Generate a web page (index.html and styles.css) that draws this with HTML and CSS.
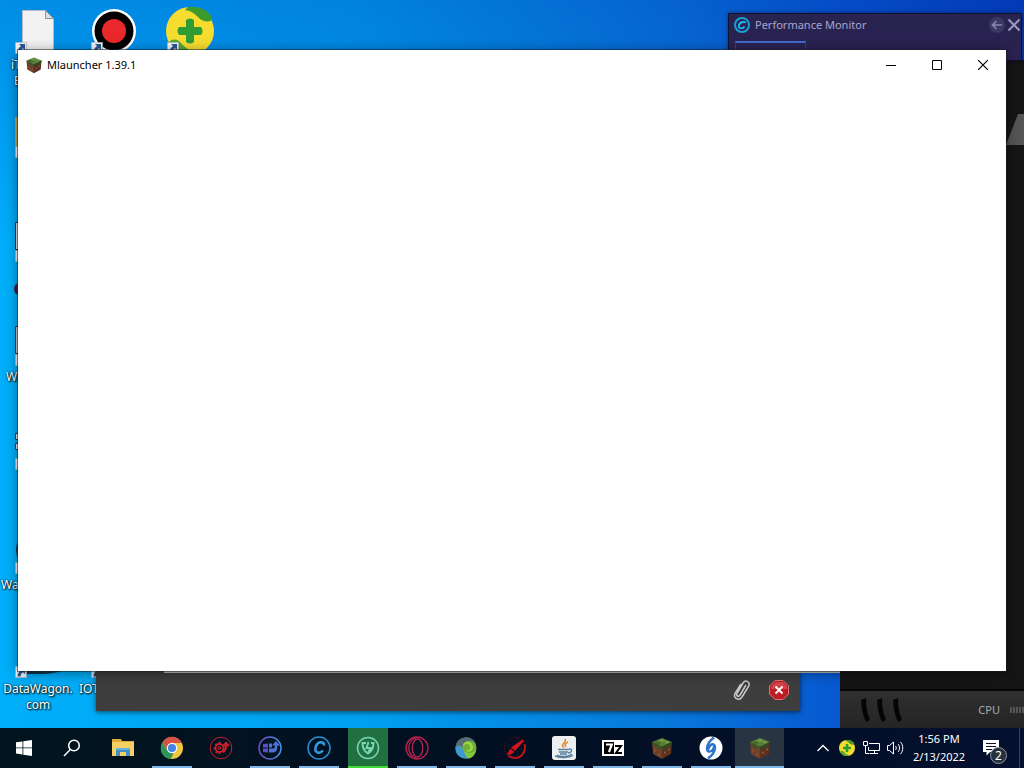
FILE: index.html
```
<!DOCTYPE html>
<html lang="en">
<head>
    <meta charset="UTF-8">
    <meta name="viewport" content="width=device-width, initial-scale=1.0">
    <title>Mlauncher 1.39.1</title>
    <link rel="stylesheet" href="styles.css">
</head>
<body>
    <!-- shared shapes -->
    <svg class="defs" width="0" height="0">
        <linearGradient id="violet" x1="0" y1="0" x2="1" y2="0">
            <stop offset="0" stop-color="#7048c4"/>
            <stop offset="1" stop-color="#4a90e0"/>
        </linearGradient>
        <symbol id="arrow" viewBox="0 0 12 12">
            <path fill="#f2f4f6" stroke="#9aa3ab" stroke-width=".6" d="M.3.3h11.400v11.400H.3z"/>
            <path fill="#2c5592" d="M4 2h6v6L8 6.200C6 7.500 5.500 9 5.500 10.500H2.500C2.500 7.500 4 5.500 6 4z"/>
        </symbol>
        <symbol id="block" viewBox="0 0 24 24">
            <path fill="#567f36" d="M12 2l10 4-10 5L2 6z"/>
            <path fill="#6f9a45" d="M12 3l4 1.500-4 1.500-4-1.500zM17 5l3 1-3 1.500-3-1z"/>
            <path fill="#44692b" d="M7 5l4 2-3 1.500L4 6.500z"/>
            <path fill="#704027" d="M2 6l10 5v12L3 18z"/>
            <path fill="#593321" d="M22 6l-10 5v12l9-5z"/>
            <path fill="#3b5428" d="M2 6l10 5v3l-2-1v-1l-2-1v2l-3-1.500V10l-2-1z"/>
            <path fill="#2f4a22" d="M22 6l-10 5v3l2-1v-1l3-1.500v2l2-1v-2l3-1.500z"/>
            <path fill="#8a5232" d="M4 13l2 1v2l-2-1zM8 17l2 1v2l-2-1zM14 16l2-1v2l-2 1zM18 13l2-1v2l-2 1z"/>
        </symbol>
        <symbol id="shield360" viewBox="0 0 48 48">
            <circle cx="24" cy="24" r="24" fill="#f7dc30"/>
            <path fill="#3d9b2c" d="M22 0c12-1 19 3 23 9v5c-5 1-9 0-12-3-4-4-7-7-14-8z"/>
            <path fill="#52a92f" d="M3 35c4-4 9-3 12 1 5 6 10 8 17 10-12 6-24 0-29-11z"/>
            <path fill="#2f9b35" d="M20 13q4-3 8 0v7h7q3 4 0 8h-7v7q-4 3-8 0v-7h-7q-3-4 0-8h7z"/>
        </symbol>
    </svg>

    <main class="desktop">
        <div class="icons">
            <div class="icon">
                <svg class="icon-image" viewBox="0 0 48 48">
                    <path fill="#f1f2f1" stroke="#b5bbbe" d="M8.500 4.500h23l8 8V48h-31z"/>
                    <path fill="#dcdfdf" stroke="#8e979c" d="M31.500 4.500v8h8z"/>
                    <use href="#arrow" x="1" y="36" width="12" height="12"/>
                </svg>
                <span class="label label-short">iT<br>&nbsp;E</span>
            </div>
            <div class="icon">
                <svg class="icon-image" viewBox="0 0 48 48">
                    <circle cx="24" cy="25" r="22" fill="#fff"/>
                    <circle cx="24" cy="25" r="19.500" fill="#000"/>
                    <circle cx="24" cy="25" r="12" fill="#e8282b"/>
                    <use href="#arrow" x="1" y="36" width="12" height="12"/>
                </svg>
            </div>
            <div class="icon">
                <svg class="icon-image" viewBox="0 0 48 48">
                    <use href="#shield360" x="0" y="1" width="48" height="48"/>
                    <use href="#arrow" x="1" y="36" width="12" height="12"/>
                </svg>
            </div>

            <div class="icon first">
                <svg class="icon-image" viewBox="0 0 48 48">
                    <path fill="#c4a24a" d="M1 7h40v29H1z"/>
                    <use href="#arrow" x="1" y="36" width="12" height="12"/>
                </svg>
            </div>
            <div class="icon first">
                <svg class="icon-image" viewBox="0 0 48 48">
                    <path fill="#dfe3e6" stroke="#26323c" d="M1.500 8.500h40v27h-40z"/>
                    <use href="#arrow" x="1" y="36" width="12" height="12"/>
                </svg>
                <svg class="label-dot" viewBox="0 0 8 12"><ellipse cx="4" cy="6" rx="4" ry="5.500" fill="#46204e"/></svg>
            </div>
            <div class="icon first">
                <svg class="icon-image" viewBox="0 0 48 48">
                    <path fill="#cfc8c6" stroke="#4b3430" d="M1.500 8.500h40v27h-40z"/>
                    <use href="#arrow" x="1" y="36" width="12" height="12"/>
                </svg>
                <span class="label label-w">W</span>
            </div>
            <div class="icon first">
                <svg class="icon-image" viewBox="0 0 48 48">
                    <path fill="#e5eaee" stroke="#22405c" d="M1.500 11.500h10v6h-10zM1.500 21.500h10v6h-10z"/>
                    <use href="#arrow" x="1" y="36" width="12" height="12"/>
                </svg>
            </div>
            <div class="icon first">
                <svg class="icon-image" viewBox="0 0 48 48">
                    <circle cx="22" cy="24" r="20" fill="#1d3d54"/>
                    <use href="#arrow" x="1" y="36" width="12" height="12"/>
                </svg>
                <span class="label label-wa">Wa</span>
            </div>
            <div class="icon first">
                <svg class="icon-image" viewBox="0 0 48 48">
                    <path fill="#14344d" d="M10 20h38v21c-12 4-26 3-38 3z"/>
                    <use href="#arrow" x="1" y="36" width="12" height="12"/>
                </svg>
                <span class="label">DataWagon. com</span>
            </div>
            <div class="icon">
                <svg class="icon-image" viewBox="0 0 48 48">
                    <use href="#arrow" x="1" y="36" width="12" height="12"/>
                </svg>
                <span class="label label-iot">IOT</span>
            </div>
        </div>

        <section class="monitor">
            <svg class="monitor-tab" viewBox="0 0 18 32"><path fill="#555" d="M12 0h6v31H0z"/></svg>
            <div class="monitor-bottom">
                <svg class="vents" viewBox="0 0 44 24">
                    <path fill="#050505" d="M1 2l5-2c0 8 1 15 4 22l-4 2C3 17 1 10 1 2zM17 2l5-2c0 8 1 15 4 22l-4 2c-3-7-5-14-5-22zM33 2l5-2c0 8 1 15 4 22l-4 2c-3-7-5-14-5-22z"/>
                </svg>
                <span class="cpu">CPU</span>
                <span class="meter"></span>
            </div>
        </section>

        <section class="performance">
            <header class="performance-header">
                <svg width="16" height="16" viewBox="0 0 16 16" fill="none">
                    <circle cx="8" cy="8" r="7" stroke="#16a0d8" stroke-width="2"/>
                    <path stroke="#20b4e6" stroke-width="2" d="M11.500 6C10.500 3.500 5 5.500 4.800 9c0 3.500 4.500 2.500 5.700.5"/>
                </svg>
                <h2>Performance Monitor</h2>
                <button class="performance-button" aria-label="Back">
                    <svg width="16" height="16" viewBox="0 0 16 16" fill="none"><circle cx="8" cy="8" r="8" fill="#3c3763"/><path stroke="#8a84b5" stroke-width="1.600" d="M13 8H3.500M7.500 4l-4 4 4 4"/></svg>
                </button>
                <button class="performance-button" aria-label="Close monitor">
                    <svg width="14" height="14" viewBox="0 0 14 14"><path stroke="#9d98c1" stroke-width="2" d="M1.500 1.500l11 11M12.500 1.500l-11 11"/></svg>
                </button>
            </header>
            <div class="performance-tab"></div>
        </section>

        <div class="back-window"></div>
        <section class="chat">
            <button class="chat-button" aria-label="Attach">
                <svg width="20" height="22" viewBox="0 0 20 22" fill="none" stroke="#c9c9c9" stroke-width="1.500"><path d="M14 6L8 16c-1.500 2.500-4.500.8-3-1.700L11 4c2.500-4 8-1 5.500 3.300L10 18c-3 4.500-9.500 1.200-6.800-3.800L9 5"/></svg>
            </button>
            <button class="chat-button" aria-label="Stop">
                <svg width="20" height="20" viewBox="0 0 20 20"><path fill="#c01c25" stroke="#dc7474" d="M6 .5h8L19.500 6v8L14 19.500H6L.5 14V6z"/><path fill="#d2444a" d="M6.500 2h7L18 6.500V9H2V6.500z"/><path stroke="#fff" stroke-width="1.800" d="M6.500 6.500l7 7M13.500 6.500l-7 7"/></svg>
            </button>
        </section>

        <section class="window">
            <header class="title-bar">
                <svg width="18" height="18"><use href="#block"/></svg>
                <h1>Mlauncher 1.39.1</h1>
                <div class="window-buttons">
                    <button aria-label="Minimize"><svg width="10" height="10" viewBox="0 0 10 10"><path stroke="#000" d="M0 5.500h10"/></svg></button>
                    <button aria-label="Maximize"><svg width="10" height="10" viewBox="0 0 10 10"><path fill="none" stroke="#000" d="M.5.5h9v9h-9z"/></svg></button>
                    <button aria-label="Close"><svg width="10" height="10" viewBox="0 0 10 10"><path stroke="#000" stroke-width="1.200" d="M0 0l10 10M10 0L0 10"/></svg></button>
                </div>
            </header>
        </section>
    </main>

    <footer class="taskbar">
        <button class="system" aria-label="Start">
            <svg width="16" height="16" viewBox="0 0 16 16" fill="#fff"><path d="M0 2.300L6.500 1.400v6.100H0zM7.300 1.300L16 0v7.500H7.300zM0 8.300h6.500v6.200L0 13.600zM7.300 8.300H16V16l-8.700-1.300z"/></svg>
        </button>
        <button class="system" aria-label="Search">
            <svg width="18" height="18" viewBox="0 0 18 18" fill="none" stroke="#fff" stroke-width="1.500"><circle cx="11" cy="6.500" r="5.300"/><path d="M7.300 10.500L1 17"/></svg>
        </button>
        <div class="apps">
            <button class="app" aria-label="File Explorer">
                <svg viewBox="0 0 24 24"><path fill="#e0a93a" d="M1 3h9l1 2h12v4H1z"/><path fill="#f6d065" d="M1 6h22v14H1z"/><path fill="#418fc4" d="M5 12h14v8h-4v-4H9v4H5z"/><path fill="#69b0dc" d="M5 12h14v2H5z"/></svg>
            </button>
            <button class="app open" aria-label="Chrome">
                <svg viewBox="0 0 24 24"><circle cx="12" cy="12" r="11" fill="#f0c840"/><path fill="#d65046" d="M2.500 6.500C7-1.500 18-1 21.800 7H12L7.500 14z"/><path fill="#2c9659" d="M2.500 6.500L7.800 15l6 1.500-3 6.400C1.500 22-1.500 13 2.500 6.500z"/><circle cx="12" cy="12" r="5.200" fill="#fff"/><circle cx="12" cy="12" r="4.100" fill="#4583e8"/></svg>
            </button>
            <button class="app" aria-label="Driver updater">
                <svg viewBox="0 0 24 24" fill="none" stroke="#c8202c"><circle cx="12" cy="12" r="10.800"/><circle cx="10.500" cy="12" r="4" stroke-width="1.800"/><path stroke-width="2" d="M6.500 8l1.500 1.500M4.500 12.500h2M7 17l1.200-2M10.500 6v2M10.500 16v2M14 16l-1-1"/><path stroke-width="2.200" d="M14 16c3-1 3-4 3-7M14.200 10L17 7l3 3"/><circle cx="10.500" cy="12" r="1.500"/></svg>
            </button>
            <button class="app open" aria-label="Software updater">
                <svg viewBox="0 0 24 24" fill="none"><circle cx="12" cy="12" r="11" stroke="url(#violet)" stroke-width="1.500"/><path fill="#5a50c4" d="M5 8l5-.5v4H5zM5 12.500h5v4L5 16z"/><path fill="#4a72d8" d="M11 7.500h3v4h-3zM11 12.500h4c2 0 2-2 2-4h2.500c0 5-1 8-4.500 8h-4zM14 9.500L18 5l4 4.500z"/></svg>
            </button>
            <button class="app open" aria-label="System care">
                <svg viewBox="0 0 24 24" fill="none"><circle cx="12" cy="12" r="11" stroke="#278ed1" stroke-width="1.500"/><path stroke="#2d9ce2" stroke-width="2.600" d="M17 9.500c.5-4.500-6-4.500-8 .5-2.500 7 3.500 8.500 7 4.500"/></svg>
            </button>
            <button class="app open secure" aria-label="Malware fighter">
                <svg viewBox="0 0 24 24" fill="none" stroke="#74d6b5"><circle cx="12" cy="12" r="10.500" stroke-width="1.500"/><path stroke-width="2" d="M10 7H6.500c0 5 1.500 8 5.500 10.500 4-2.500 5.500-5.500 5.500-10.500H15M12.500 6l-2 6h4l-2 4"/></svg>
            </button>
            <button class="app open" aria-label="Opera">
                <svg viewBox="0 0 24 24" fill="none" stroke="#b92250" stroke-width="1.300"><circle cx="12" cy="12" r="11"/><ellipse cx="12.500" cy="12" rx="5.200" ry="9"/><path d="M12 1.500C1 5 1 19 12 22.500"/></svg>
            </button>
            <button class="app open" aria-label="Edge">
                <svg viewBox="0 0 24 24"><circle cx="12" cy="12" r="10.500" fill="#6fae3c"/><path fill="#546c74" d="M1.500 12C2-1 18-1.500 21.500 7 14 2 8 6 9 12c-2-3-5-3-7.500 0z"/><path fill="#9bd83c" d="M9 11C8 4 19 4 19 11c0 5-6 6-7 3 3 1 5-1 4-4-2-4-6-2-7 1z"/><path fill="#3b9bd0" d="M1.500 12c4-5 6-1 7.500 2 2 4 3 6 6 8C8 24 1 19 1.500 12z"/><path fill="#82c83a" d="M10 15c3 3 8 3 12-1-1 6-5 8.500-8 8.500-2-2-3-4-4-7.500z"/></svg>
            </button>
            <button class="app open" aria-label="Red tool">
                <svg viewBox="0 0 24 24" fill="none"><circle cx="12" cy="12" r="10.500" stroke="#3d0a14"/><path fill="#d3141c" d="M19.500 3.500L21 5l-9 10-4-3.500zM7.500 12.500l4 3.500-3.500 2.500-4.500.5z"/><path stroke="#b8141e" stroke-width="2" d="M21.500 8c2 7-3 14-9 14-3 0-5-1-7-2"/></svg>
            </button>
            <button class="app open" aria-label="Java">
                <svg viewBox="0 0 24 24" fill="none"><rect x="0" y="0" width="24" height="24" rx="3" fill="#edf0f1"/><path stroke="#e38725" stroke-width="1.500" d="M13 3c3 3-6 5-1 9M16 6c-4 2-3 3-2 5"/><path stroke="#5b7f9c" stroke-width="1.400" d="M6 13.500h11M7 16h9M17 13c4-1 3 4-1 4M5 19c3 2 12 2 15-1M8 18h7M3 20c6 2.500 14 2 18-.5"/></svg>
            </button>
            <button class="app open" aria-label="7-Zip">
                <svg viewBox="0 0 24 24"><path fill="#fff" d="M1 4h22v16H1z"/><path fill="#000" d="M3 6h10v12H3z"/><path fill="none" stroke="#fff" stroke-width="2.200" d="M5 8.500h5.800L8 16"/><path fill="none" stroke="#000" stroke-width="2" d="M14 10h6l-5 7h6"/></svg>
            </button>
            <button class="app open" aria-label="Minecraft">
                <svg><use href="#block"/></svg>
            </button>
            <button class="app open" aria-label="Blue launcher">
                <svg viewBox="0 0 24 24" fill="none"><circle cx="12" cy="12" r="11.500" fill="#fff"/><path stroke="#2c74cc" stroke-width="2.400" d="M15 1.500c-4 3-7 6-7 11 0 4 4 4 6 1 2-4 1-6-1-5-2 0-3 3-4 5M9 22.500c4-3 7-7 7-11 0-3-2-4-4-3"/></svg>
            </button>
            <button class="app open active" aria-label="Mlauncher">
                <svg><use href="#block"/></svg>
            </button>
        </div>
        <div class="tray">
            <button class="tray-button" aria-label="Show hidden icons"><svg width="12" height="8" viewBox="0 0 12 8"><path fill="none" stroke="#fff" stroke-width="1.300" d="M.5 7L6 1.500 11.500 7"/></svg></button>
            <button class="tray-button" aria-label="360 Total Security"><svg width="16" height="16"><use href="#shield360"/></svg></button>
            <button class="tray-button" aria-label="Network"><svg width="17" height="16" viewBox="0 0 17 16"><path fill="none" stroke="#fff" d="M6 3.500h10.500v7H5.500V7M11.500 10.500v3M7 13.500h8M.5 1.500h4v4h-4zM2.500 5.500v8h4"/></svg></button>
            <button class="tray-button" aria-label="Volume"><svg width="17" height="16" viewBox="0 0 17 16"><path fill="none" stroke="#fff" d="M.5 5.500h2l4-3.500v12l-4-3.500h-2zM8.500 6c1 1 1 3 0 4M11 4c2 2 2 6 0 8M13.500 2c3 3 3 9 0 12"/></svg></button>
            <div class="clock"><span>1:56 PM</span><span>2/13/2022</span></div>
            <button class="notifications" aria-label="Notifications">
                <svg width="16" height="16" viewBox="0 0 16 16"><path fill="#fff" d="M0 0h16v12h-9l-3.500 3.500V12H0z"/><path stroke="#07142b" d="M3 3.500h10M3 6.500h10M3 9.500h6"/></svg>
                <span class="count">2</span>
            </button>
        </div>
    </footer>
</body>
</html>
```
FILE: styles.css
```
* {
    box-sizing: border-box;
}
body {
    margin: 0;
    height: 100vh;
    display: flex;
    flex-direction: column;
    overflow: hidden;
    font-family: "Noto Sans", "Open Sans", sans-serif;
    font-size: 11px;
}
h1,
h2 {
    margin: 0;
    font-size: 11px;
    font-weight: normal;
}
button {
    display: flex;
    align-items: center;
    justify-content: center;
    padding: 0;
    border: 0;
    background: none;
    font: inherit;
}
svg {
    display: block;
    flex-shrink: 0;
}
.defs {
    position: absolute;
}

/* desktop */
.desktop {
    position: relative;
    flex: 1;
    min-height: 0;
    overflow: hidden;
    background: linear-gradient(to bottom, rgba(0, 40, 170, .25), rgba(0, 120, 240, 0) 35%), linear-gradient(to right, #00aff9, #00a0f0 35%, #0878dc 65%, #0758d0 82%, #0340b8);
}
.icons {
    display: grid;
    grid-template-columns: 76px 76px 76px;
    grid-auto-rows: 104px;
    padding-top: 6px;
}
.icon {
    display: flex;
    flex-direction: column;
    align-items: center;
    gap: 3px;
}
.first {
    grid-column: 1;
}
.icon-image {
    width: 48px;
    height: 48px;
}
.label {
    width: 100%;
    color: #fff;
    font-size: 12px;
    line-height: 16px;
    text-align: center;
    text-shadow: 1px 1px 2px #000, 0 0 2px #000;
}
.label-short {
    padding-left: 11px;
    text-align: left;
}
.label-w {
    padding-left: 6px;
    text-align: left;
}
.label-wa {
    padding-left: 1px;
    text-align: left;
}
.label-iot {
    padding-left: 3px;
    text-align: left;
}
.label-dot {
    align-self: flex-start;
    width: 8px;
    height: 16px;
    margin: 16px 0 0 14px;
}

/* windows */
.monitor {
    position: absolute;
    top: 60px;
    right: 0;
    bottom: 0;
    width: 184px;
    display: flex;
    flex-direction: column;
    align-items: flex-end;
    justify-content: space-between;
    padding-top: 54px;
    background: #151515;
}
.monitor-tab {
    width: 18px;
    height: 32px;
}
.monitor-bottom {
    display: flex;
    align-items: center;
    width: 100%;
    height: 39px;
    padding-left: 20px;
    border-top: 2px solid #060606;
    background: linear-gradient(#303030, #242424);
    color: #aaa;
}
.vents {
    width: 44px;
    height: 24px;
}
.cpu {
    margin-left: auto;
}
.meter {
    width: 14px;
    height: 6px;
    margin-left: 10px;
    background: repeating-linear-gradient(to right, #555 0, #555 2px, #2a2a2a 2px, #2a2a2a 3px);
}
.performance {
    position: absolute;
    top: 13px;
    right: 2px;
    width: 294px;
    height: 48px;
    border: 1px solid #101030;
    background: linear-gradient(#28234f, #2a2253);
    box-shadow: 0 0 4px rgba(0, 0, 40, .5);
    color: #aaa5cf;
}
.performance-header {
    display: flex;
    align-items: center;
    gap: 5px;
    height: 21px;
    padding-left: 5px;
}
.performance-button:first-of-type {
    margin-left: auto;
}
.performance-button + .performance-button {
    margin-left: -3px;
}
.performance-tab {
    width: 71px;
    height: 20px;
    margin: 6px;
    border: 1px solid #513464;
    border-top: 2px solid #4069ca;
}
.chat {
    position: absolute;
    left: 96px;
    right: 224px;
    bottom: 17px;
    height: 42px;
    display: flex;
    align-items: center;
    justify-content: flex-end;
    gap: 17px;
    padding-right: 11px;
    background: #3e3e3e;
    box-shadow: 0 1px 5px rgba(0, 0, 0, .6);
}
.back-window {
    position: absolute;
    left: 164px;
    right: 184px;
    bottom: 55px;
    z-index: 1;
    height: 20px;
    background: #bcc0c4;
}
.window {
    position: absolute;
    top: 50px;
    left: 18px;
    right: 18px;
    bottom: 57px;
    z-index: 2;
    background: #fff;
    box-shadow: 0 0 0 1px rgba(20, 30, 40, .5), 0 2px 12px rgba(0, 0, 0, .45);
}
.title-bar {
    display: flex;
    align-items: center;
    gap: 4px;
    height: 29px;
    padding-left: 7px;
}
.window-buttons {
    display: flex;
    align-self: stretch;
    margin-left: auto;
}
.window-buttons button {
    width: 46px;
}

/* taskbar */
.taskbar {
    display: flex;
    height: 40px;
    background: linear-gradient(to right, #02151f, #020f22 50%, #04102e);
    color: #fff;
}
.system {
    width: 48px;
}
.apps {
    display: flex;
    padding-left: 2px;
}
.app {
    width: 49px;
    padding: 0 4px;
}
.app svg {
    width: 24px;
    height: 24px;
}
.open {
    background: linear-gradient(#7eb7e8, #7eb7e8) bottom / 40px 2px no-repeat;
}
.secure {
    background: linear-gradient(#42dc38, #42dc38) bottom / 40px 2px no-repeat, linear-gradient(#226f3f, #226f3f) center / 40px 40px no-repeat;
}
.active {
    background: linear-gradient(#7eb7e8, #7eb7e8) bottom / 100% 2px no-repeat, #293443;
}
.tray {
    display: flex;
    margin-left: auto;
    padding-right: 4px;
}
.tray-button {
    width: 24px;
}
.clock {
    display: flex;
    flex-direction: column;
    align-items: center;
    justify-content: center;
    width: 64px;
    line-height: 18px;
}
.notifications {
    position: relative;
    width: 49px;
    padding-right: 8px;
    border-right: 1px solid #3a4354;
    color: #fff;
}
.count {
    position: absolute;
    right: 12px;
    bottom: 4px;
    width: 17px;
    height: 17px;
    border: 1px solid #8d949c;
    border-radius: 50%;
    background: #263140;
    font-size: 12px;
    line-height: 15px;
    text-align: center;
}
```
